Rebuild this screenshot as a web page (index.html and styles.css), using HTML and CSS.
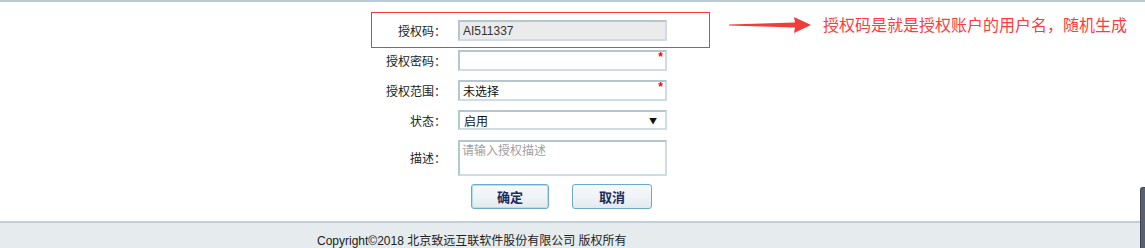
FILE: index.html
```html
<!DOCTYPE html>
<html lang="zh-CN">
<head>
    <meta charset="UTF-8">
    <title>授权账户</title>
    <link rel="stylesheet" href="styles.css">
</head>
<body>

<div class="page">
    <div class="form">
        <label class="label">授权码：</label>
        <div class="field"><input class="input readonly" type="text" value="AI511337" readonly></div>

        <label class="label">授权密码：</label>
        <div class="field"><input class="input" type="password"><span class="required">*</span></div>

        <label class="label">授权范围：</label>
        <div class="field"><input class="input" type="text" value="未选择"><span class="required">*</span></div>

        <label class="label">状态：</label>
        <div class="field">
            <div class="select"><span>启用</span><span class="caret">▼</span></div>
        </div>

        <label class="label label-top">描述：</label>
        <div class="field"><textarea class="textarea" placeholder="请输入授权描述"></textarea></div>

        <div></div>
        <div class="actions">
            <button class="btn btn-focus">确定</button>
            <button class="btn btn-wide">取消</button>
        </div>
    </div>

    <!-- annotation drawn on top of the screenshot -->
    <div class="note-box"></div>
    <svg class="note-arrow" width="84" height="18" viewBox="0 0 84 18">
        <polygon points="0,7.6 66,5.5 65,0 82,8 65,16 66,10.5 0,8.6" fill="#f23b3b"/>
    </svg>
    <div class="note-text">授权码是就是授权账户的用户名，随机生成</div>

    <div class="scroll-thumb"></div>
</div>

<div class="footer">Copyright©2018 北京致远互联软件股份有限公司 版权所有</div>

</body>
</html>
```

FILE: styles.css
```css
body {
    margin: 0;
    padding: 0;
    font-family: "Liberation Sans", "Noto Sans CJK SC", sans-serif;
    font-size: 12px;
    color: #222;
    background-color: #fff;
    overflow: hidden;
}
.page {
    position: relative;
    height: 221px;
    border-top: 2px solid #b9ccd5;
    box-sizing: border-box;
}
.form {
    display: grid;
    grid-template-columns: 100px 209px;
    column-gap: 16px;
    row-gap: 9px;
    margin-left: 342px;
    padding-top: 18px;
}
.label {
    text-align: right;
    line-height: 21px;
    font-family: "Noto Sans CJK SC", sans-serif;
    white-space: nowrap;
    margin-right: -4px;
}
.label-top {
    line-height: 36px;
}
.field {
    position: relative;
}
.input, .textarea, .select {
    box-sizing: border-box;
    width: 209px;
    height: 21px;
    margin: 0;
    padding: 0 3px;
    border: 2px solid #b4c7cf;
    border-right-color: #cfdce2;
    border-bottom-color: #cfdce2;
    background-color: #fff;
    font-family: "Liberation Sans", "Noto Sans CJK SC", sans-serif;
    font-size: 12px;
    color: #111;
    outline: none;
    display: block;
}
.readonly {
    background-color: #ebebeb;
    color: #333;
}
.required {
    position: absolute;
    right: 4px;
    top: 1px;
    color: #ff0000;
    font-size: 12px;
    line-height: 12px;
    font-weight: bold;
}
.select {
    height: 20px;
    display: flex;
    align-items: center;
    justify-content: space-between;
    padding: 0 8px 0 4px;
    font-family: "Noto Sans CJK SC", sans-serif;
}
.caret {
    font-size: 8px;
    color: #111;
}
.textarea {
    height: 36px;
    resize: none;
    padding: 0 2px;
    line-height: 16px;
    font-family: "Noto Sans CJK SC", sans-serif;
}
.textarea::placeholder {
    color: #a0a0a0;
}
.actions {
    display: flex;
    gap: 23px;
    padding-left: 13px;
    margin-top: -1px;
}
.btn {
    width: 78px;
    height: 25px;
    border: 1px solid #70a8c9;
    border-radius: 3px;
    background: linear-gradient(#f6f9fa, #eef3f5 55%, #e2eaee);
    color: #1d2a5c;
    font-family: "Noto Sans CJK SC", sans-serif;
    font-size: 13px;
    font-weight: bold;
    padding: 0;
    cursor: pointer;
}
.btn-focus {
    box-shadow: inset 0 0 0 1px #b4e0f4;
}
.btn-wide {
    width: 80px;
}
.note-box {
    position: absolute;
    left: 371px;
    top: 10px;
    width: 337px;
    height: 34px;
    border: 1px solid #f23b3b;
}
.note-arrow {
    position: absolute;
    left: 729px;
    top: 15px;
}
.note-text {
    position: absolute;
    left: 823px;
    top: 12px;
    color: #ff3b3b;
    font-family: "Noto Sans CJK SC", sans-serif;
    font-size: 16px;
    line-height: 20px;
    white-space: nowrap;
}
.scroll-thumb {
    position: absolute;
    right: 0;
    top: 185px;
    width: 4px;
    height: 63px;
    background-color: #596170;
    border: 1px solid #3e4450;
    border-right: none;
    border-radius: 3px 0 0 0;
    z-index: 2;
}
.footer {
    height: 27px;
    box-sizing: border-box;
    border-top: 2px solid #bfd0d8;
    background-color: #e6ecee;
    padding: 11px 0 0 317px;
    line-height: 14px;
    color: #222;
    font-family: "Liberation Sans", "Noto Sans CJK SC", sans-serif;
    font-size: 12px;
    overflow: hidden;
}
```
